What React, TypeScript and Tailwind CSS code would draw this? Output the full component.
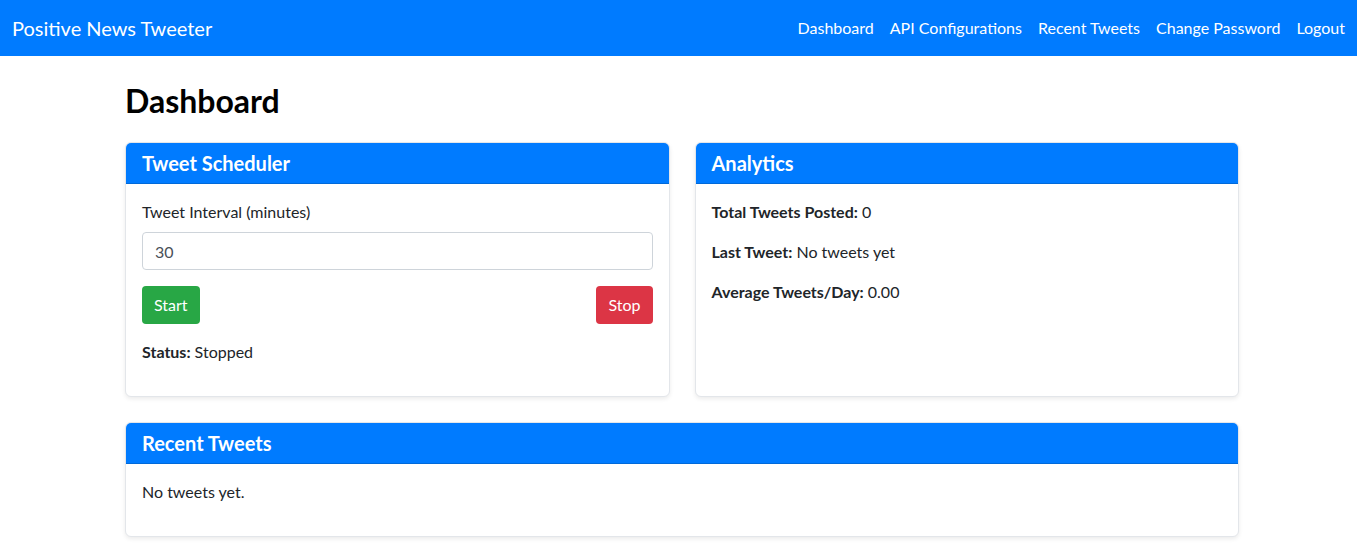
import React from 'react';

const font = { fontFamily: 'Lato, "Noto Sans", sans-serif' };

function Card({ title, children, className = '' }: { title: string; children: React.ReactNode; className?: string }) {
  return (
    <section className={`bg-white rounded-md border border-[#e3e6ea] shadow-[0_2px_4px_rgba(0,0,0,0.08)] overflow-hidden flex flex-col ${className}`}>
      <h3 className="bg-[#007bff] text-white text-[20px] font-bold leading-6 px-4 py-2 border-b border-[#0069d9]">
        {title}
      </h3>
      <div className="p-4 flex-1 text-[16px] leading-6 text-[#212529]">{children}</div>
    </section>
  );
}

export default function App() {
  return (
    <div className="min-h-screen bg-white" style={font}>
      {/* Navbar */}
      <nav className="h-14 bg-[#007bff] flex items-center justify-between pl-3 pr-1">
        <span className="text-white text-[20px] leading-6">Positive News Tweeter</span>
        <ul className="flex items-center text-white text-[16px] leading-6">
          <li className="px-2">Dashboard</li>
          <li className="px-2">API Configurations</li>
          <li className="px-2">Recent Tweets</li>
          <li className="px-2">Change Password</li>
          <li className="px-2">Logout</li>
        </ul>
      </nav>

      <main className="ml-[125px] w-[1114px]">
        <h1 className="mt-[26px] mb-[22px] text-[32px] leading-[38px] font-bold text-black">Dashboard</h1>

        <div className="grid grid-cols-2 gap-[25px]">
          {/* Tweet Scheduler */}
          <Card title="Tweet Scheduler">
            <label className="block mb-2">Tweet Interval (minutes)</label>
            <input
              type="number"
              defaultValue={30}
              className="block w-full h-[38px] px-3 rounded border border-[#ced4da] text-[#495057] outline-none"
            />
            <div className="flex justify-between mt-4">
              <button className="h-[38px] px-3 rounded bg-[#28a745] text-white">Start</button>
              <button className="h-[38px] px-3 rounded bg-[#dc3545] text-white">Stop</button>
            </div>
            <p className="mt-4 mb-4">
              <strong className="font-bold">Status:</strong> Stopped
            </p>
          </Card>

          {/* Analytics */}
          <Card title="Analytics">
            <p className="mb-4">
              <strong className="font-bold">Total Tweets Posted:</strong> 0
            </p>
            <p className="mb-4">
              <strong className="font-bold">Last Tweet:</strong> No tweets yet
            </p>
            <p className="mb-4">
              <strong className="font-bold">Average Tweets/Day:</strong> 0.00
            </p>
          </Card>
        </div>

        <Card title="Recent Tweets" className="mt-[25px]">
          <p className="mb-4">No tweets yet.</p>
        </Card>
      </main>
    </div>
  );
}
